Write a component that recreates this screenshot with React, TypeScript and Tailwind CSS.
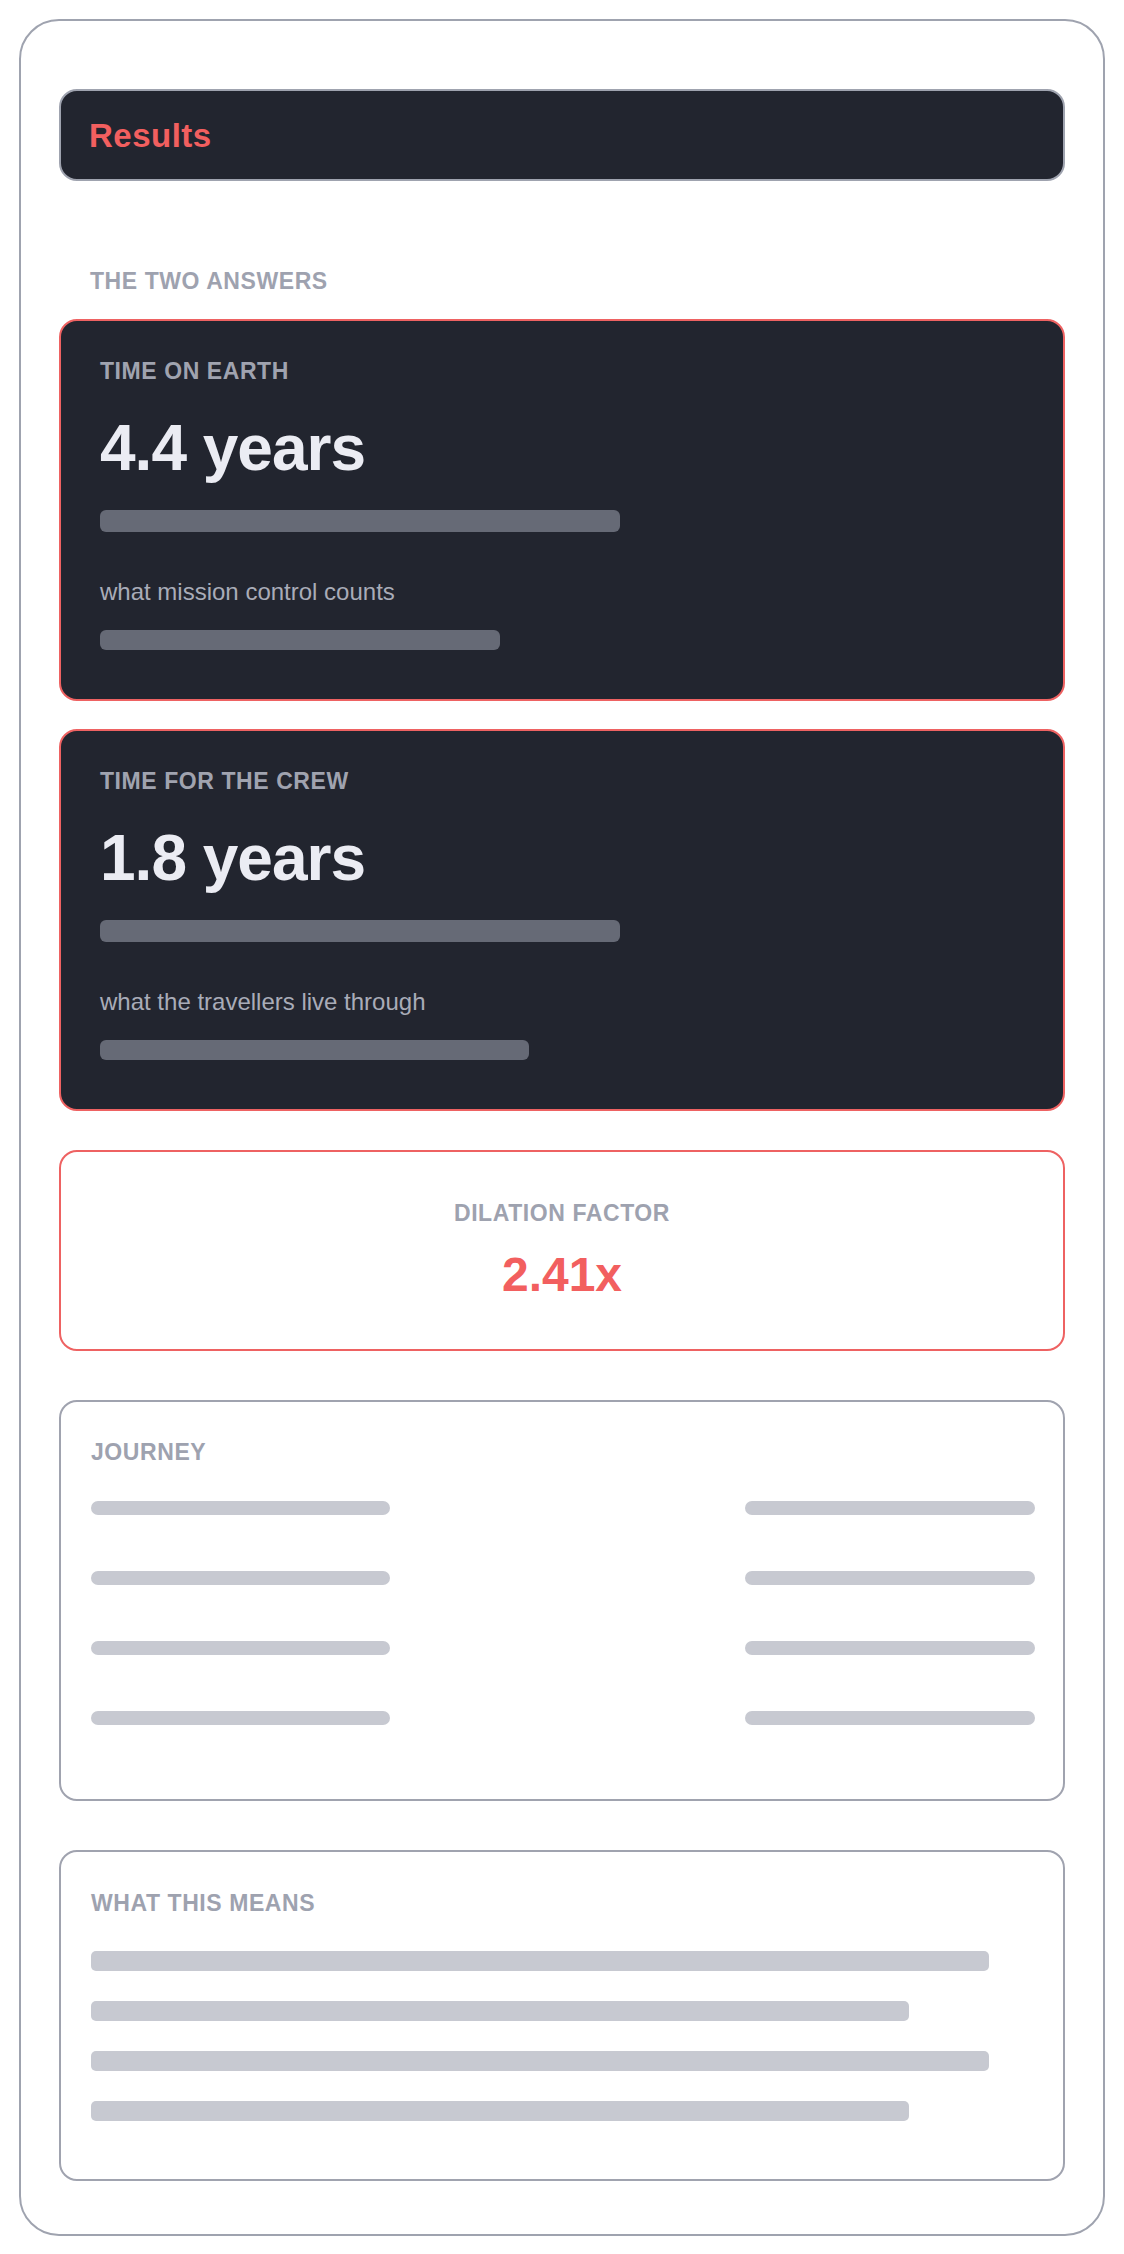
import React from "react";

const font = { fontFamily: '"Liberation Sans", Arial, sans-serif' };

function TimeCard({ label, value, sub, bar2 }: { label: string; value: string; sub: string; bar2: string }) {
  return (
    <div className="rounded-[18px] border-2 border-[#ee6262] bg-[#22252f] pl-[39px] pt-[37px] pb-[49px]">
      <div className="text-[23px] leading-[26px] font-bold tracking-wide text-[#a0a3af]">{label}</div>
      <div className="mt-[32px] text-[64px] leading-[64px] font-bold tracking-[-1px] text-[#ebecf3]">{value}</div>
      <div className="mt-[30px] h-[22px] w-[520px] rounded-[6px] bg-[#666a76]" />
      <div className="mt-[46px] text-[24px] leading-[28px] text-[#a9acb8]">{sub}</div>
      <div className={`mt-[24px] h-[20px] rounded-[6px] bg-[#666a76] ${bar2}`} />
    </div>
  );
}

export default function App() {
  return (
    <div className="min-h-screen bg-white p-[19px]" style={font}>
      <div className="rounded-[40px] border-2 border-[#9fa3af] bg-white px-[38px] pt-[68px] pb-[53px]">
        <div className="flex h-[92px] items-center rounded-[18px] border-2 border-[#9fa3af] bg-[#22252f] pl-[28px] pt-[2px]">
          <h1 className="text-[33px] leading-[36px] font-bold tracking-[0.5px] text-[#f25f5f]">Results</h1>
        </div>

        <div className="mt-[87px] pl-[31px] text-[23px] leading-[26px] font-bold tracking-wide text-[#9ea2af]">
          THE TWO ANSWERS
        </div>

        <div className="mt-[25px]">
          <TimeCard label="TIME ON EARTH" value="4.4 years" sub="what mission control counts" bar2="w-[400px]" />
        </div>
        <div className="mt-[28px]">
          <TimeCard label="TIME FOR THE CREW" value="1.8 years" sub="what the travellers live through" bar2="w-[429px]" />
        </div>

        <div className="mt-[39px] rounded-[18px] border-2 border-[#ee6262] bg-white pt-[48px] pb-[50px] text-center">
          <div className="text-[23px] leading-[26px] font-bold tracking-wide text-[#9ea2af]">DILATION FACTOR</div>
          <div className="mt-[25px] text-[48px] leading-[48px] font-bold text-[#f25f5f]">2.41x</div>
        </div>

        <div className="mt-[49px] rounded-[18px] border-2 border-[#a0a3af] bg-white pl-[30px] pr-[28px] pt-[37px] pb-[74px]">
          <div className="text-[23px] leading-[26px] font-bold tracking-wide text-[#9ea2af]">JOURNEY</div>
          <div className="mt-[36px] flex flex-col gap-[56px]">
            {[0, 1, 2, 3].map((i) => (
              <div key={i} className="flex justify-between">
                <div className="h-[14px] w-[299px] rounded-full bg-[#c7c9d1]" />
                <div className="h-[14px] w-[290px] rounded-full bg-[#c7c9d1]" />
              </div>
            ))}
          </div>
        </div>

        <div className="mt-[49px] rounded-[18px] border-2 border-[#a0a3af] bg-white pl-[30px] pr-[28px] pt-[38px] pb-[58px]">
          <div className="text-[23px] leading-[26px] font-bold tracking-wide text-[#9ea2af]">WHAT THIS MEANS</div>
          <div className="mt-[35px] flex flex-col gap-[30px]">
            <div className="h-[20px] w-[898px] rounded-[5px] bg-[#c7c9d1]" />
            <div className="h-[20px] w-[818px] rounded-[5px] bg-[#c7c9d1]" />
            <div className="h-[20px] w-[898px] rounded-[5px] bg-[#c7c9d1]" />
            <div className="h-[20px] w-[818px] rounded-[5px] bg-[#c7c9d1]" />
          </div>
        </div>
      </div>
    </div>
  );
}
